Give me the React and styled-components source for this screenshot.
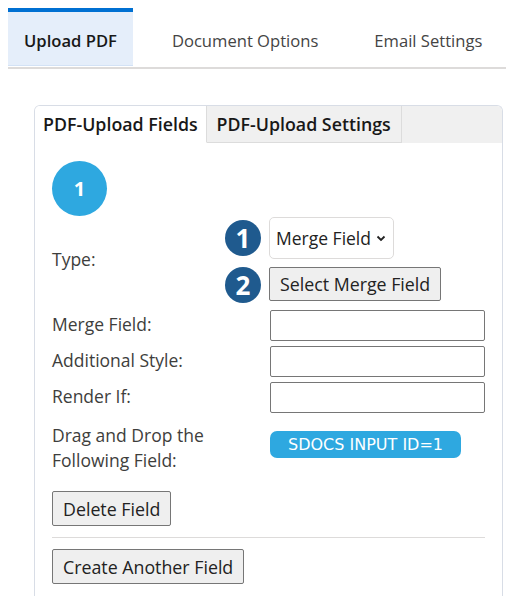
import React from "react"
import styled, { createGlobalStyle } from "styled-components"

const Global = createGlobalStyle`
  body {
    margin: 8px 0 0 8px;
    font-family: "Open Sans", Lato, sans-serif;
    color: #3e3e3c;
    background: #fff;
  }
`

const TopTabs = styled.div`
  display: flex;
  border-bottom: 2px solid #dddbda;
  height: 59px;
`

const TopTab = styled.div`
  display: flex;
  align-items: center;
  justify-content: center;
  padding: 3px ${p => (p.active ? "16px" : "0")} 0;
  margin-right: ${p => p.mr || 0}px;
  margin-bottom: 1px;
  font-size: 16.6px;
  font-weight: ${p => (p.active ? 600 : 400)};
  color: ${p => (p.active ? "#181818" : "#444")};
  background: ${p => (p.active ? "#e5eefa" : "transparent")};
  border-top: 4px solid ${p => (p.active ? "#0070d2" : "transparent")};
  border-bottom: 1px solid ${p => (p.active ? "#d3e2f5" : "transparent")};
  box-sizing: border-box;
`

const Card = styled.div`
  margin: 36px 3px 0 26px;
  border: 1px solid #d8dde6;
  border-radius: 6px;
  border-bottom: none;
  border-bottom-left-radius: 0;
  border-bottom-right-radius: 0;
  overflow: hidden;
`

const CardTabs = styled.div`
  display: flex;
  background: #f0f0f0;
  height: 37px;
`

const CardTab = styled.div`
  display: flex;
  align-items: center;
  padding: 0 ${p => (p.active ? "8px" : "10px")};
  font-size: 17.8px;
  font-weight: 600;
  color: #181818;
  background: ${p => (p.active ? "#fff" : "#f0f0f0")};
  border-right: 1px solid #dcdcdc;
  border-bottom: 1px solid ${p => (p.active ? "#fff" : "#dcdcdc")};
`

const Body = styled.div`
  padding: 18px 17px 12px 17px;
`

const StepCircle = styled.div`
  width: 55px;
  height: 55px;
  border-radius: 50%;
  background: #2ea8e0;
  color: #fff;
  font-size: 20px;
  font-weight: 700;
  display: flex;
  align-items: center;
  justify-content: center;
`

const Row = styled.div`
  display: grid;
  grid-template-columns: 218px 1fr;
  align-items: center;
  margin-top: ${p => p.gap || 5}px;
  font-size: 17.5px;
`

const Label = styled.div`
  line-height: 25px;
  margin-top: -2px;
`

const Stack = styled.div`
  display: flex;
  flex-direction: column;
  gap: 8px;
`

const Marked = styled.div`
  display: flex;
  align-items: center;
  margin-left: -45px;
  gap: 8px;
`

const Marker = styled.div`
  width: 36px;
  height: 36px;
  border-radius: 50%;
  background: #1f5a8e;
  color: #fff;
  font-size: 26px;
  font-weight: 700;
  display: flex;
  align-items: center;
  justify-content: center;
`

const Select = styled.div`
  height: 42px;
  box-sizing: border-box;
  padding: 0 7px 0 6px;
  border: 1px solid #dddbda;
  border-radius: 5px;
  display: flex;
  align-items: center;
  gap: 5px;
  font-size: 17.5px;
  color: #222;
`

const Button = styled.button`
  font-family: "Open Sans", Lato, sans-serif;
  font-size: 17.8px;
  color: #222;
  background: #efefef;
  border: 1px solid #767676;
  border-radius: 2px;
  height: ${p => p.h || 34}px;
  padding: 0 10px;
  justify-self: start;
  align-self: flex-start;
`

const Input = styled.input`
  width: 215px;
  height: 31px;
  box-sizing: border-box;
  border: 1px solid #767676;
  border-radius: 2px;
`

const Pill = styled.div`
  justify-self: start;
  align-self: start;
  margin-top: 6px;
  width: 191px;
  height: 27px;
  border-radius: 7px;
  background: #2ea8e0;
  color: #fff;
  font-family: "DejaVu Sans", sans-serif;
  font-size: 16px;
  display: flex;
  align-items: center;
  justify-content: center;
`

const Divider = styled.hr`
  border: none;
  border-top: 1px solid #dddbda;
  margin: 11px 0 11px 0;
`

export default function App() {
  return (
    <>
      <Global />
      <TopTabs>
        <TopTab active mr={39}>Upload PDF</TopTab>
        <TopTab mr={56}>Document Options</TopTab>
        <TopTab>Email Settings</TopTab>
      </TopTabs>
      <Card>
        <CardTabs>
          <CardTab active>PDF-Upload Fields</CardTab>
          <CardTab>PDF-Upload Settings</CardTab>
        </CardTabs>
        <Body>
          <StepCircle>1</StepCircle>
          <Row gap={1}>
            <Label>Type:</Label>
            <Stack>
              <Marked>
                <Marker>1</Marker>
                <Select>
                  Merge Field
                  <svg width="10" height="10" viewBox="0 0 10 10">
                    <path d="M1.5 3.5l3.5 3.5 3.5-3.5" fill="none" stroke="#222" strokeWidth="1.8" />
                  </svg>
                </Select>
              </Marked>
              <Marked>
                <Marker>2</Marker>
                <Button>Select Merge Field</Button>
              </Marked>
            </Stack>
          </Row>
          <Row gap={7}>
            <Label>Merge Field:</Label>
            <Input />
          </Row>
          <Row>
            <Label>Additional Style:</Label>
            <Input />
          </Row>
          <Row>
            <Label>Render If:</Label>
            <Input />
          </Row>
          <Row gap={12}>
            <Label>Drag and Drop the<br />Following Field:</Label>
            <Pill>SDOCS INPUT ID=1</Pill>
          </Row>
          <Row gap={18}>
            <Button h={35}>Delete Field</Button>
          </Row>
          <Divider />
          <Button h={35}>Create Another Field</Button>
        </Body>
      </Card>
    </>
  )
}
